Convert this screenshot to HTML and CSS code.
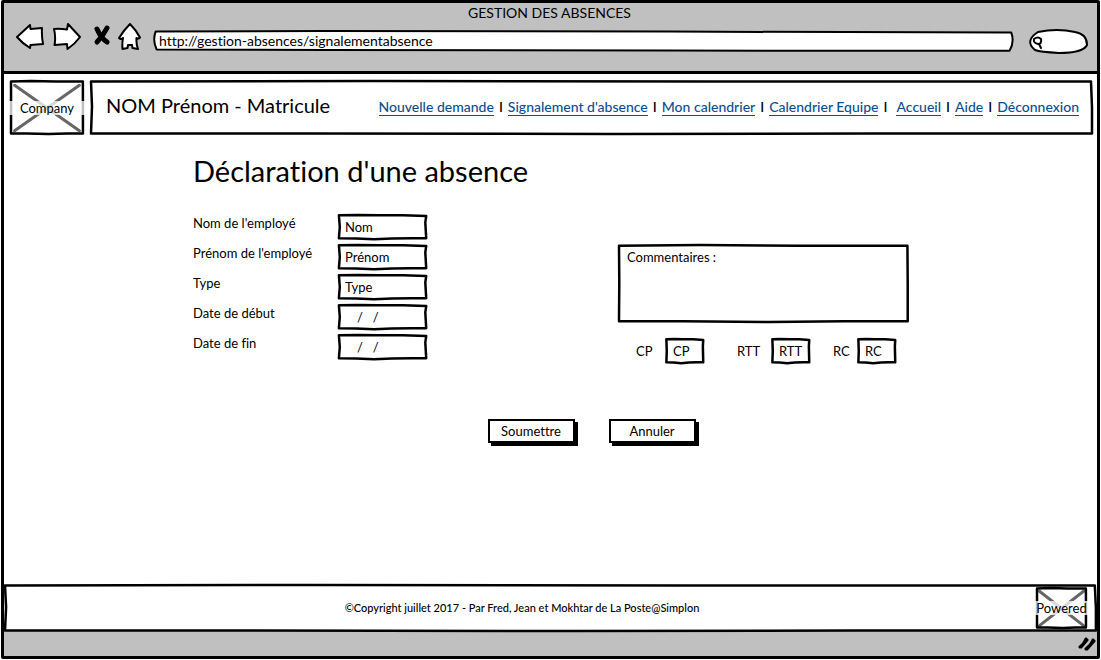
FILE: index.html
```html
<!DOCTYPE html>
<html lang="fr">
<head>
<meta charset="utf-8">
<meta name="viewport" content="width=device-width, initial-scale=1">
<title>Gestion des absences</title>
<link rel="stylesheet" href="styles.css">
</head>
<body>
<svg class="defs" aria-hidden="true">
  <symbol id="frame" viewBox="0 0 100 100" preserveAspectRatio="none">
    <path class="stroke" d="M0 1 L28 0 L62 1 L99.800 1 L99.900 50 L99.900 99 L78 99 L52 100 L22 99 L0 99 L0.100 48 Z"/>
  </symbol>
  <symbol id="field" viewBox="0 0 100 100" preserveAspectRatio="none">
    <path class="stroke" d="M1 5 L22 4 L45 5 L72 5 L98 8 L97 32 L98 93 L82 93 L60 94 L40 97 L20 94 L1 93 L2 50 Z"/>
  </symbol>
  <symbol id="cross" viewBox="0 0 100 100" preserveAspectRatio="none">
    <path class="cross-line" d="M5 8 L95 94 M95 8 L5 94"/>
  </symbol>
</svg>

<div class="window">
  <header class="chrome">
    <div class="chrome-title">GESTION DES ABSENCES</div>
    <div class="toolbar">
      <div class="tools">
        <button class="tool" type="button" aria-label="Précédent">
          <svg width="28" height="28" viewBox="0 0 28 28"><path class="glyph" d="M1 14 L14 2 L14.500 6 L26 5 Q25.500 13 27 21 L14.500 22 L14 25 Q6 20 1 14 Z"/></svg>
        </button>
        <button class="tool" type="button" aria-label="Suivant">
          <svg width="28" height="28" viewBox="0 0 28 28"><path class="glyph" d="M27 14 L15 1 L14 6.500 Q7 5.500 1 6 Q3 14 1.500 22 L14 21 L14.500 26 Q22 21 27 14 Z"/></svg>
        </button>
        <button class="tool tool-stop" type="button" aria-label="Arrêter">
          <svg width="18" height="28" viewBox="0 0 18 28"><path class="stop" d="M4 6 Q8 15 14 19 M14 5 Q10 13 4 19"/></svg>
        </button>
        <button class="tool" type="button" aria-label="Accueil du navigateur">
          <svg width="24" height="28" viewBox="0 0 24 28"><path class="glyph" d="M1 15 Q6 7 12 1 Q18 7 22 14.500 Q20 16.500 18.500 15 Q18 21 20 26 L14.500 25 L14 22 L10 22 L9.500 25 L4.500 26 Q4 20 5 15 Q3 17 1 15 Z"/></svg>
        </button>
      </div>
      <div class="address sketch">
        <svg class="outline" viewBox="0 0 100 100" preserveAspectRatio="none" aria-hidden="true"><path class="stroke thin paper" d="M0.200 2 L20 0 L60 3 L99.800 8 Q100.200 55 99.600 99 L60 98 L20 95 L0.300 92 Q-0.200 45 0.200 2 Z"/></svg>
        <input class="address-input" type="text" aria-label="Adresse" value="http://gestion-absences/signalementabsence">
      </div>
      <div class="search sketch">
        <svg class="outline" viewBox="0 0 60 24" preserveAspectRatio="none" aria-hidden="true"><path class="search-shape" d="M10 3 Q29 -1 47 3 Q59 5 59 16 Q55 24 31 24 Q12 23 7 21 Q-4 12 10 3 Z"/><path class="lens" d="M6 10 Q10 7 13 10 Q14 15 10 15 Q5 14 6 10 M11 15 L13 19"/></svg>
        <input class="search-input" type="text" aria-label="Rechercher">
      </div>
    </div>
  </header>

  <div class="top">
    <div class="logo sketch">
      <svg class="outline"><use href="#cross"/><use href="#frame"/></svg>
      <span class="logo-text">Company</span>
    </div>
    <div class="banner sketch">
      <svg class="outline"><use href="#frame"/></svg>
      <div class="user">NOM Prénom - Matricule</div>
      <nav class="nav">
        <a href="#">Nouvelle demande</a><span>I</span><a href="#">Signalement d'absence</a><span>I</span><a href="#">Mon calendrier</a><span>I</span><a href="#">Calendrier Equipe</a><span class="wide">I</span><a href="#">Accueil</a><span>I</span><a href="#">Aide</a><span>I</span><a href="#">Déconnexion</a>
      </nav>
    </div>
  </div>

  <main class="content">
    <h1 class="heading">Déclaration d'une absence</h1>
    <form class="form">
      <div class="columns">
        <div class="fields">
          <label for="nom">Nom de l'employé</label>
          <div class="field sketch"><svg class="outline"><use href="#field"/></svg><input id="nom" type="text" value="Nom"></div>
          <label for="prenom">Prénom de l'employé</label>
          <div class="field sketch"><svg class="outline"><use href="#field"/></svg><input id="prenom" type="text" value="Prénom"></div>
          <label for="type">Type</label>
          <div class="field sketch"><svg class="outline"><use href="#field"/></svg><input id="type" type="text" value="Type"></div>
          <label for="debut">Date de début</label>
          <div class="field sketch"><svg class="outline"><use href="#field"/></svg><input id="debut" class="date" type="text" value="/   /"></div>
          <label for="fin">Date de fin</label>
          <div class="field sketch"><svg class="outline"><use href="#field"/></svg><input id="fin" class="date" type="text" value="/   /"></div>
        </div>
        <div class="side">
          <div class="comments sketch">
            <svg class="outline"><use href="#frame"/></svg>
            <textarea aria-label="Commentaires">Commentaires :</textarea>
          </div>
          <div class="counters">
            <label for="cp">CP</label>
            <div class="field small sketch"><svg class="outline"><use href="#field"/></svg><input id="cp" type="text" value="CP"></div>
            <label for="rtt">RTT</label>
            <div class="field small sketch"><svg class="outline"><use href="#field"/></svg><input id="rtt" type="text" value="RTT"></div>
            <label for="rc">RC</label>
            <div class="field small sketch"><svg class="outline"><use href="#field"/></svg><input id="rc" type="text" value="RC"></div>
          </div>
        </div>
      </div>
      <div class="actions">
        <button class="button" type="submit">Soumettre</button>
        <button class="button" type="reset">Annuler</button>
      </div>
    </form>
  </main>

  <footer class="footer sketch">
    <svg class="outline"><use href="#frame"/></svg>
    <p class="copyright">©Copyright juillet 2017 - Par Fred, Jean et Mokhtar de La Poste@Simplon</p>
    <div class="logo powered sketch">
      <svg class="outline"><use href="#cross"/><use href="#frame"/></svg>
      <span class="logo-text">Powered</span>
    </div>
  </footer>
  <div class="status">
    <svg width="18" height="16" viewBox="0 0 18 16" aria-hidden="true"><path class="grip" d="M2 11 Q6 8 8 3 M3 11 L9 4 M8 13 Q13 9 15 4 M9 13 L16 5"/></svg>
  </div>
</div>
</body>
</html>
```

FILE: styles.css
```css
* {
  box-sizing: border-box;
}

body {
  margin: 0;
  background: #fff;
  color: #000;
  font: 13px/20px Lato, "Open Sans", sans-serif;
  font-variant-ligatures: none;
}

input,
textarea,
button {
  font: inherit;
  font-variant-ligatures: none;
  color: inherit;
}

input,
textarea {
  display: block;
  width: 100%;
  min-width: 0;
  margin: 0;
  border: 0;
  background: transparent;
  position: relative;
}

.defs {
  display: none;
}

.sketch {
  position: relative;
}

.outline {
  position: absolute;
  inset: 0;
  width: 100%;
  height: 100%;
  overflow: visible;
  pointer-events: none;
}

.outline use,
symbol {
  overflow: visible;
}

.stroke {
  fill: none;
  stroke: #000;
  stroke-width: 2.5px;
  stroke-linejoin: round;
  vector-effect: non-scaling-stroke;
}

.thin {
  stroke-width: 2px;
}

.paper {
  fill: #fff;
}

.cross-line {
  fill: none;
  stroke: #666;
  stroke-width: 3px;
  stroke-linecap: round;
  vector-effect: non-scaling-stroke;
}

.window {
  display: flex;
  flex-direction: column;
  min-height: calc(100vh - 1px);
  margin: 0 1px 1px;
  border: 3px solid #000;
  border-radius: 2px;
}

.chrome {
  padding-bottom: 19px;
  border-bottom: 3px solid #000;
  background: #c0c0c0;
}

.chrome-title {
  padding-right: 2px;
  font-size: 14px;
  line-height: 19px;
  text-align: center;
}

.toolbar {
  display: flex;
  align-items: center;
  height: 30px;
  padding: 0 9px 0 12px;
}

.tools {
  display: flex;
  gap: 9px;
  margin-right: 12px;
}

.tool {
  display: flex;
  padding: 0;
  border: 0;
  background: none;
}

.tool-stop {
  margin-left: 3px;
  margin-right: -2px;
}

.glyph {
  fill: #fff;
  stroke: #000;
  stroke-width: 2px;
  stroke-linejoin: round;
}

.stop {
  fill: none;
  stroke: #000;
  stroke-width: 5px;
  stroke-linecap: round;
}

.address {
  flex: 1;
  margin-top: 8px;
}

.address-input {
  height: 20px;
  padding: 0 5px 1px;
  font-size: 14px;
}

.search {
  width: 60px;
  margin: 8px 0 0 15px;
}

.search-input {
  height: 24px;
  padding: 0 8px 0 18px;
}

.search-shape {
  fill: #fff;
  stroke: #000;
  stroke-width: 2px;
}

.lens {
  fill: none;
  stroke: #000;
  stroke-width: 2px;
  stroke-linecap: round;
}

.top {
  display: flex;
  gap: 8px;
  padding: 7px 4px 0 7px;
}

.logo {
  display: flex;
  align-items: center;
  justify-content: center;
  width: 72px;
  height: 53px;
}

.logo-text {
  position: relative;
  flex: 1;
  height: 14px;
  margin: 0 -3px;
  background: rgba(255, 255, 255, 0.75);
  line-height: 14px;
  text-align: center;
}

.banner {
  display: flex;
  flex: 1;
  align-items: center;
  justify-content: space-between;
  padding: 0 14px 0 15px;
}

.user {
  padding-bottom: 6px;
  font-size: 20px;
}

.nav {
  display: flex;
  gap: 5px;
  font-size: 14px;
  font-weight: 500;
  line-height: 16px;
}

.nav a {
  border-bottom: 1px solid #0b4f92;
  color: #0b4f92;
  text-decoration: none;
}

.nav .wide {
  margin-right: 4px;
}

.content {
  flex: 1;
  width: 100%;
  max-width: 715px;
  margin: 0 auto;
}

.heading {
  margin: 19px 0 25px;
  font-size: 29px;
  font-weight: 400;
  line-height: 36px;
}

.columns {
  display: flex;
  align-items: flex-start;
  justify-content: space-between;
}

.fields {
  display: grid;
  grid-template-columns: 145px 90px;
  row-gap: 4px;
}

.fields label {
  line-height: 18px;
}

.field {
  height: 26px;
}

.field input {
  height: 26px;
  padding: 0 7px 1px;
}

.field .date {
  padding-left: 19px;
}

.side {
  width: 289px;
  padding-top: 31px;
}

.comments textarea {
  height: 77px;
  padding: 2px 8px;
  resize: none;
}

.counters {
  display: grid;
  grid-template-columns: 30px 71px 35px 61px 25px 38px;
  align-items: center;
  padding: 16px 0 0 17px;
}

.small {
  width: 38px;
}

.actions {
  display: flex;
  justify-content: center;
  gap: 34px;
  padding: 55px 0 24px 82px;
}

.button {
  width: 87px;
  height: 24px;
  padding: 0;
  border: 2px solid #000;
  background: #fff;
  box-shadow: 3px 3px 0 #000;
  line-height: 20px;
}

.footer {
  display: flex;
  align-items: center;
  height: 46px;
  margin: 0 0 0 1px;
  padding: 0 11px 0 2px;
}

.copyright {
  flex: 1;
  margin: 0;
  font-size: 11px;
  font-weight: 500;
  text-align: center;
}

.powered {
  width: 49px;
  height: 40px;
}

.status {
  display: flex;
  align-items: center;
  justify-content: flex-end;
  height: 25px;
  padding-right: 1px;
  background: #c0c0c0;
}

.grip {
  fill: none;
  stroke: #000;
  stroke-width: 3px;
  stroke-linecap: round;
}
```
